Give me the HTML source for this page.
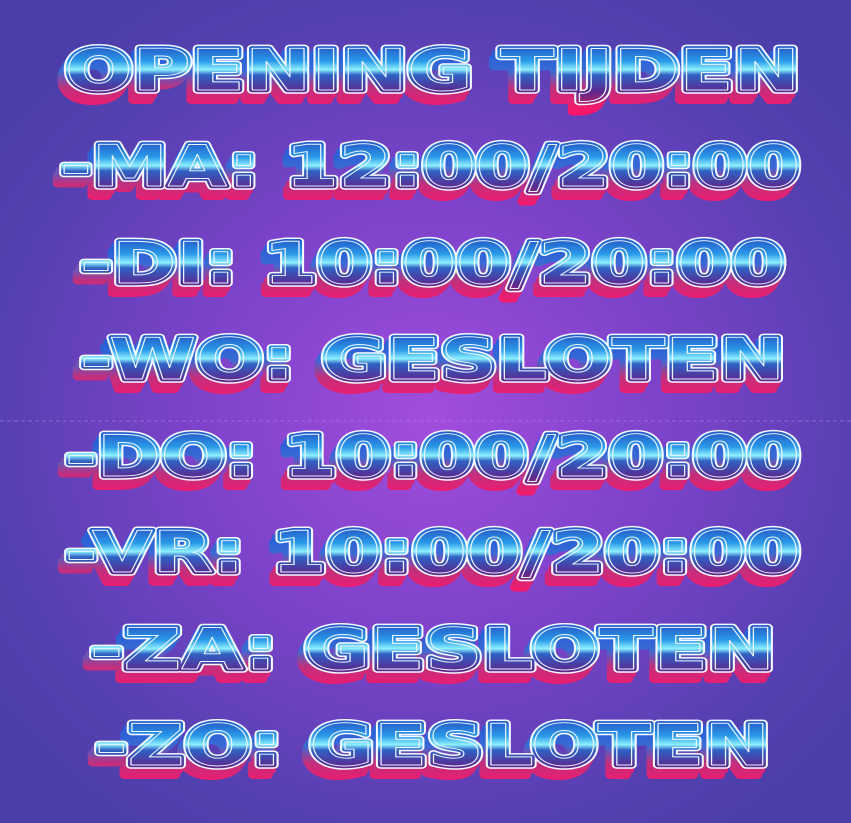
<!DOCTYPE html>
<html><head><meta charset="utf-8"><style>
html,body{margin:0;padding:0;width:851px;height:823px;overflow:hidden}
body{background:radial-gradient(ellipse 560px 520px at 430px 420px,#a24ddd 0%,#7a42c8 45%,#5340b0 80%,#4a3ea8 100%)}
svg{position:absolute;left:0;top:0}
text{font-family:"DejaVu Sans","Liberation Sans",sans-serif;font-weight:bold;font-size:57px}
.e{fill:url(#ge);stroke:url(#ge);stroke-width:8;stroke-linejoin:round}
.w{fill:#fff;stroke:#f4f8ff;stroke-width:7.5;stroke-linejoin:round}
.f{fill:url(#gf);stroke:url(#gf);stroke-width:4.5;stroke-linejoin:round}
.i{fill:none;stroke:#e8f4ff;stroke-width:0.9;stroke-linejoin:round}
</style></head><body>
<svg width="851" height="823" viewBox="0 0 851 823">
<defs>
<linearGradient id="ge" x1="0" y1="0" x2="0" y2="1"><stop offset="0" stop-color="#1f5ad8"/><stop offset="0.35" stop-color="#3a6ad4"/><stop offset="0.6" stop-color="#c0307e"/><stop offset="1" stop-color="#ff1468"/></linearGradient>
<linearGradient id="gf" x1="0" y1="0" x2="0" y2="1"><stop offset="0" stop-color="#2238b8"/><stop offset="0.35" stop-color="#2a9ae8"/><stop offset="0.48" stop-color="#8ef0ff"/><stop offset="0.56" stop-color="#2e62c4"/><stop offset="0.8" stop-color="#5a2a90"/><stop offset="1" stop-color="#b0206a"/></linearGradient>
</defs>
<line x1="0" y1="421" x2="851" y2="421" stroke="#b88ae8" stroke-width="1" stroke-dasharray="4 3" opacity="0.5"/>
<g><text class="e" x="62" y="95" textLength="735" lengthAdjust="spacingAndGlyphs">OPENING TIJDEN</text><text class="e" x="59" y="100" textLength="735" lengthAdjust="spacingAndGlyphs">OPENING TIJDEN</text><text class="w" x="65" y="90" textLength="735" lengthAdjust="spacingAndGlyphs">OPENING TIJDEN</text><text class="f" x="65" y="90" textLength="735" lengthAdjust="spacingAndGlyphs">OPENING TIJDEN</text><text class="i" x="65" y="90" textLength="735" lengthAdjust="spacingAndGlyphs">OPENING TIJDEN</text></g>
<g><text class="e" x="57" y="191" textLength="740" lengthAdjust="spacingAndGlyphs">-MA: 12:00/20:00</text><text class="e" x="54" y="196" textLength="740" lengthAdjust="spacingAndGlyphs">-MA: 12:00/20:00</text><text class="w" x="60" y="186" textLength="740" lengthAdjust="spacingAndGlyphs">-MA: 12:00/20:00</text><text class="f" x="60" y="186" textLength="740" lengthAdjust="spacingAndGlyphs">-MA: 12:00/20:00</text><text class="i" x="60" y="186" textLength="740" lengthAdjust="spacingAndGlyphs">-MA: 12:00/20:00</text></g>
<g><text class="e" x="77" y="288" textLength="705" lengthAdjust="spacingAndGlyphs">-DI: 10:00/20:00</text><text class="e" x="74" y="293" textLength="705" lengthAdjust="spacingAndGlyphs">-DI: 10:00/20:00</text><text class="w" x="80" y="283" textLength="705" lengthAdjust="spacingAndGlyphs">-DI: 10:00/20:00</text><text class="f" x="80" y="283" textLength="705" lengthAdjust="spacingAndGlyphs">-DI: 10:00/20:00</text><text class="i" x="80" y="283" textLength="705" lengthAdjust="spacingAndGlyphs">-DI: 10:00/20:00</text></g>
<g><text class="e" x="77" y="384" textLength="705" lengthAdjust="spacingAndGlyphs">-WO: GESLOTEN</text><text class="e" x="74" y="389" textLength="705" lengthAdjust="spacingAndGlyphs">-WO: GESLOTEN</text><text class="w" x="80" y="379" textLength="705" lengthAdjust="spacingAndGlyphs">-WO: GESLOTEN</text><text class="f" x="80" y="379" textLength="705" lengthAdjust="spacingAndGlyphs">-WO: GESLOTEN</text><text class="i" x="80" y="379" textLength="705" lengthAdjust="spacingAndGlyphs">-WO: GESLOTEN</text></g>
<g><text class="e" x="62" y="481" textLength="735" lengthAdjust="spacingAndGlyphs">-DO: 10:00/20:00</text><text class="e" x="59" y="486" textLength="735" lengthAdjust="spacingAndGlyphs">-DO: 10:00/20:00</text><text class="w" x="65" y="476" textLength="735" lengthAdjust="spacingAndGlyphs">-DO: 10:00/20:00</text><text class="f" x="65" y="476" textLength="735" lengthAdjust="spacingAndGlyphs">-DO: 10:00/20:00</text><text class="i" x="65" y="476" textLength="735" lengthAdjust="spacingAndGlyphs">-DO: 10:00/20:00</text></g>
<g><text class="e" x="62" y="577" textLength="735" lengthAdjust="spacingAndGlyphs">-VR: 10:00/20:00</text><text class="e" x="59" y="582" textLength="735" lengthAdjust="spacingAndGlyphs">-VR: 10:00/20:00</text><text class="w" x="65" y="572" textLength="735" lengthAdjust="spacingAndGlyphs">-VR: 10:00/20:00</text><text class="f" x="65" y="572" textLength="735" lengthAdjust="spacingAndGlyphs">-VR: 10:00/20:00</text><text class="i" x="65" y="572" textLength="735" lengthAdjust="spacingAndGlyphs">-VR: 10:00/20:00</text></g>
<g><text class="e" x="87" y="674" textLength="685" lengthAdjust="spacingAndGlyphs">-ZA: GESLOTEN</text><text class="e" x="84" y="679" textLength="685" lengthAdjust="spacingAndGlyphs">-ZA: GESLOTEN</text><text class="w" x="90" y="669" textLength="685" lengthAdjust="spacingAndGlyphs">-ZA: GESLOTEN</text><text class="f" x="90" y="669" textLength="685" lengthAdjust="spacingAndGlyphs">-ZA: GESLOTEN</text><text class="i" x="90" y="669" textLength="685" lengthAdjust="spacingAndGlyphs">-ZA: GESLOTEN</text></g>
<g><text class="e" x="92" y="770" textLength="675" lengthAdjust="spacingAndGlyphs">-ZO: GESLOTEN</text><text class="e" x="89" y="775" textLength="675" lengthAdjust="spacingAndGlyphs">-ZO: GESLOTEN</text><text class="w" x="95" y="765" textLength="675" lengthAdjust="spacingAndGlyphs">-ZO: GESLOTEN</text><text class="f" x="95" y="765" textLength="675" lengthAdjust="spacingAndGlyphs">-ZO: GESLOTEN</text><text class="i" x="95" y="765" textLength="675" lengthAdjust="spacingAndGlyphs">-ZO: GESLOTEN</text></g>
</svg>
</body></html>
